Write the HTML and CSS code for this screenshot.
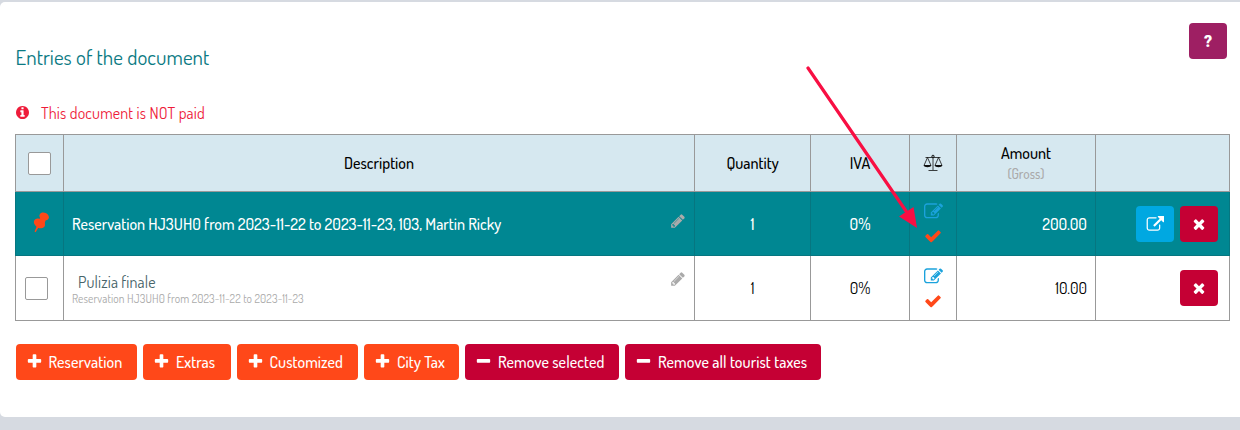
FILE: index.html
```
<!DOCTYPE html>
<html lang="en">
<head>
    <meta charset="UTF-8">
    <meta name="viewport" content="width=device-width, initial-scale=1.0">
    <title>Entries of the document</title>
    <link rel="stylesheet" href="styles.css">
</head>
<body>
    <!-- icon shapes -->
    <svg class="icon-defs" width="0" height="0">
        <symbol id="plus" viewBox="0 0 1792 1792"><path d="M1600 736v192q0 40-28 68t-68 28h-416v416q0 40-28 68t-68 28h-192q-40 0-68-28t-28-68v-416h-416q-40 0-68-28t-28-68v-192q0-40 28-68t68-28h416v-416q0-40 28-68t68-28h192q40 0 68 28t28 68v416h416q40 0 68 28t28 68z"/></symbol>
        <symbol id="minus" viewBox="0 0 1792 1792"><path d="M1600 736v192q0 40-28 68t-68 28h-1216q-40 0-68-28t-28-68v-192q0-40 28-68t68-28h1216q40 0 68 28t28 68z"/></symbol>
        <symbol id="times" viewBox="0 0 1792 1792"><path d="M1490 1322q0 40-28 68l-136 136q-28 28-68 28t-68-28l-294-294-294 294q-28 28-68 28t-68-28l-136-136q-28-28-28-68t28-68l294-294-294-294q-28-28-28-68t28-68l136-136q28-28 68-28t68 28l294 294 294-294q28-28 68-28t68 28l136 136q28 28 28 68t-28 68l-294 294 294 294q28 28 28 68z"/></symbol>
        <symbol id="check" viewBox="0 0 1792 1792"><path d="M1671 566q0 40-28 68l-724 724-136 136q-28 28-68 28t-68-28l-136-136-362-362q-28-28-28-68t28-68l136-136q28-28 68-28t68 28l294 295 656-657q28-28 68-28t68 28l136 136q28 28 28 68z"/></symbol>
        <symbol id="pencil" viewBox="0 0 1792 1792"><path d="M491 1536l91-91-235-235-91 91v107h128v128h107zm523-928q0-22-22-22-10 0-17 7l-542 542q-7 7-7 17 0 22 22 22 10 0 17-7l542-542q7-7 7-17zm-54-192l416 416-832 832h-416v-416zm683 96q0 53-37 90l-166 166-416-416 166-165q36-38 90-38 53 0 91 38l235 234q37 39 37 91z"/></symbol>
        <symbol id="external" viewBox="0 0 1856 1792"><path d="M1472 992v320q0 119-84.5 203.5t-203.5 84.5h-832q-119 0-203.5-84.5t-84.5-203.5v-832q0-119 84.5-203.5t203.5-84.5h704q14 0 23 9t9 23v64q0 14-9 23t-23 9h-704q-66 0-113 47t-47 113v832q0 66 47 113t113 47h832q66 0 113-47t47-113v-320q0-14 9-23t23-9h64q14 0 23 9t9 23zm384-864v512q0 26-19 45t-45 19-45-19l-176-176-652 652q-10 10-23 10t-23-10l-114-114q-10-10-10-23t10-23l652-652-176-176q-19-19-19-45t19-45 45-19h512q26 0 45 19t19 45z"/></symbol>
        <symbol id="edit" viewBox="0 0 1792 1792"><path d="M888 1184l116-116-152-152-116 116v56h96v96h56zm440-720q-16-16-33 1l-350 350q-17 17-1 33t33-1l350-350q17-17 1-33zm80 594v190q0 119-84.5 203.5t-203.5 84.5h-832q-119 0-203.5-84.5t-84.5-203.5v-832q0-119 84.5-203.5t203.5-84.5h832q63 0 117 25 15 7 18 23 3 17-9 29l-49 49q-14 14-32 8-23-6-45-6h-832q-66 0-113 47t-47 113v832q0 66 47 113t113 47h832q66 0 113-47t47-113v-126q0-13 9-22l64-64q15-15 35-7t20 29zm-96-738l288 288-672 672h-288v-288zm444 132l-92 92-288-288 92-92q28-28 68-28t68 28l152 152q28 28 28 68t-28 68z"/></symbol>
    </svg>

    <div class="panel">
        <div class="panel-header">
            <h1>Entries of the document</h1>
            <button class="btn-icon help">?</button>
        </div>

        <p class="warning">
            <svg class="info" viewBox="128 128 1536 1536"><path d="M1152 1376v-160q0-14-9-23t-23-9h-96v-512q0-14-9-23t-23-9h-320q-14 0-23 9t-9 23v160q0 14 9 23t23 9h96v320h-96q-14 0-23 9t-9 23v160q0 14 9 23t23 9h448q14 0 23-9t9-23zm-128-896v-160q0-14-9-23t-23-9h-192q-14 0-23 9t-9 23v160q0 14 9 23t23 9h192q14 0 23-9t9-23zm640 416q0 209-103 385.5t-279.5 279.5-385.5 103-385.5-103-279.5-279.5-103-385.5 103-385.5 279.5-279.5 385.5-103 385.5 103 279.5 279.5 103 385.5z"/></svg>
            <span>This document is NOT paid</span>
        </p>

        <table>
            <colgroup>
                <col class="col-check"><col class="col-desc"><col class="col-qty"><col class="col-iva"><col class="col-tax"><col class="col-amount"><col class="col-actions">
            </colgroup>
            <tr class="head">
                <th><span class="checkbox"></span></th>
                <th>Description</th>
                <th>Quantity</th>
                <th>IVA</th>
                <th>
                    <svg class="scale" viewBox="0 0 20 18"><path d="M10 1v15M5.500 16.500h9M2.500 3.500h15M4.500 3.500L1.200 11M4.500 3.500L7.800 11M15.500 3.500L12.200 11M15.500 3.500L18.800 11"/><path class="pan" d="M.5 11h8c-.5 3-7.500 3-8 0zM11.500 11h8c-.5 3-7.500 3-8 0z"/><circle cx="10" cy="2.500" r="1.300"/></svg>
                </th>
                <th>Amount<small>(Gross)</small></th>
                <th></th>
            </tr>
            <tr class="selected">
                <td class="pick">
                    <svg class="pin" viewBox="0 0 18 22"><ellipse cx="11.800" cy="4.600" rx="5.200" ry="4" transform="rotate(25 11.800 4.600)"/><ellipse cx="6.800" cy="12" rx="6.300" ry="4.600" transform="rotate(32 6.800 12)"/><path d="M8.500 5l5 3-1.500 5-6.500-3zM4.500 14l2 1-3.700 6.200-1.200-.6z"/></svg>
                </td>
                <td>
                    <div class="desc">
                        <span class="title">Reservation HJ3UH0 from 2023-11-22 to 2023-11-23, 103, Martin Ricky</span>
                        <svg class="pencil"><use href="#pencil"/></svg>
                    </div>
                </td>
                <td>1</td>
                <td>0%</td>
                <td class="tax">
                    <svg class="edit"><use href="#edit"/></svg>
                    <svg class="check"><use href="#check"/></svg>
                </td>
                <td class="amount">200.00</td>
                <td>
                    <div class="actions">
                        <button class="btn-icon open"><svg><use href="#external"/></svg></button>
                        <button class="btn-icon delete"><svg><use href="#times"/></svg></button>
                    </div>
                </td>
            </tr>
            <tr>
                <td class="pick"><span class="checkbox"></span></td>
                <td>
                    <div class="desc two-lines">
                        <div>
                            <div class="extra">Pulizia finale</div>
                            <div class="note">Reservation HJ3UH0 from 2023-11-22 to 2023-11-23</div>
                        </div>
                        <svg class="pencil"><use href="#pencil"/></svg>
                    </div>
                </td>
                <td>1</td>
                <td>0%</td>
                <td class="tax">
                    <svg class="edit"><use href="#edit"/></svg>
                    <svg class="check"><use href="#check"/></svg>
                </td>
                <td class="amount">10.00</td>
                <td>
                    <div class="actions">
                        <button class="btn-icon delete"><svg><use href="#times"/></svg></button>
                    </div>
                </td>
            </tr>
        </table>

        <div class="toolbar">
            <button class="btn b-res"><svg><use href="#plus"/></svg><span>Reservation</span></button>
            <button class="btn b-ext"><svg><use href="#plus"/></svg><span>Extras</span></button>
            <button class="btn b-cus"><svg><use href="#plus"/></svg><span>Customized</span></button>
            <button class="btn b-tax"><svg><use href="#plus"/></svg><span>City Tax</span></button>
            <button class="btn remove b-sel"><svg><use href="#minus"/></svg><span>Remove selected</span></button>
            <button class="btn remove b-all"><svg><use href="#minus"/></svg><span>Remove all tourist taxes</span></button>
        </div>
    </div>

    <!-- pointer over the tax column -->
    <svg class="arrow" viewBox="0 0 112 164"><path class="line" d="M2 2L102 148"/><path d="M111 162L93 150.500L107.500 141z"/></svg>
</body>
</html>
```
FILE: styles.css
```
* {
    box-sizing: border-box;
}

body {
    margin: 0;
    padding-top: 2px;
    height: 430px;
    overflow: hidden;
    background-color: #d6dae1;
    font-family: Dosis, Roboto, sans-serif;
    font-size: 16px;
    color: #000;
}

svg {
    display: block;
    fill: currentColor;
}

.icon-defs {
    position: absolute;
}

.panel {
    height: 415px;
    padding: 0 10px 0 15px;
    background-color: #fff;
    border-radius: 5px 0 0 5px;
}

.panel-header {
    display: flex;
    justify-content: space-between;
    height: 91px;
    padding: 21px 3px 0 0;
}

h1 {
    margin: 20px 0 0 0.5px;
    font-size: 21px;
    line-height: 28px;
    font-weight: 400;
    letter-spacing: 0.05px;
    color: #0b7a83;
}

.btn-icon {
    display: flex;
    align-items: center;
    justify-content: center;
    width: 38px;
    height: 36px;
    padding: 0;
    border: none;
    border-radius: 4px;
    color: #fff;
}

.help {
    background-color: #9e1f63;
    font: 900 16px Roboto, sans-serif;
}

.warning {
    display: flex;
    align-items: center;
    gap: 12px;
    height: 41px;
    margin: 0;
    padding-bottom: 2px;
    letter-spacing: 0.16px;
    color: #ee1c3a;
}

.info {
    width: 13px;
    height: 13px;
    margin-left: 1px;
}

table {
    width: 1214px;
    table-layout: fixed;
    border-collapse: collapse;
}

.col-check { width: 48px; }
.col-desc { width: 631px; }
.col-qty { width: 116px; }
.col-iva { width: 99px; }
.col-tax { width: 47px; }
.col-amount { width: 139px; }
.col-actions { width: 134px; }

th, td {
    height: 65px;
    padding: 0 8px;
    border: 1px solid #999;
    text-align: center;
    line-height: 20px;
}

tr.head th {
    height: 57px;
    background-color: #d6e8f0;
    font-weight: 550;
}

th small {
    display: block;
    font-size: 13.5px;
    line-height: 21px;
    font-weight: 500;
    color: #aaa;
}

tr.selected td {
    height: 64px;
    background-color: #008792;
    border-color: #067680;
    color: #fff;
    font-weight: 500;
}

.checkbox {
    display: block;
    width: 23px;
    height: 23px;
    margin: 0 auto;
    background-color: #fff;
    border: 1px solid #999;
    border-radius: 2px;
}

.pick .checkbox {
    margin: 0 0 0 1px;
}

.pin {
    width: 17px;
    height: 21px;
    margin: -2px 0 0 9px;
    color: #ff4819;
}

.scale {
    width: 20px;
    height: 18px;
    margin: 0 auto;
    fill: none;
    stroke: #111;
    stroke-width: 0.8;
}

.scale .pan {
    fill: #111;
    stroke: none;
}

.desc {
    display: flex;
    justify-content: space-between;
    align-items: center;
    text-align: left;
}

.pencil {
    width: 16px;
    height: 16px;
    margin-top: -5px;
    color: #aaa;
}

.two-lines .pencil {
    margin-top: -18px;
}

.desc .title {
    white-space: nowrap;
}

.extra {
    padding: 1px 0 0 6px;
    letter-spacing: 0.14px;
    color: #476469;
}

.note {
    font-size: 11.5px;
    line-height: 14px;
    letter-spacing: 0.12px;
    color: #aaa;
}

.tax {
    padding: 0;
}

.tax svg {
    margin: 0 auto;
    color: #1ba2dc;
}

.edit {
    width: 19px;
    height: 19px;
}

.tax .check {
    width: 18px;
    height: 18px;
    margin-top: 6px;
    color: #ff4819;
}

.amount {
    text-align: right;
}

.actions {
    display: flex;
    justify-content: flex-end;
    gap: 6px;
    padding-right: 3px;
}

.open {
    background-color: #00a8e1;
}

.open svg {
    width: 18px;
    height: 18px;
}

.delete {
    background-color: #c50034;
}

.delete svg {
    width: 16px;
    height: 16px;
}

.toolbar {
    display: flex;
    gap: 6px;
    padding: 23px 0 0 0.5px;
}

.btn {
    display: flex;
    align-items: center;
    gap: 6px;
    height: 36px;
    padding: 0 0 0 10px;
    border: none;
    border-radius: 4px;
    background-color: #ff4819;
    color: #fff;
    font-family: inherit;
    font-size: 16px;
    font-weight: 500;
    letter-spacing: 0.08px;
    white-space: nowrap;
}

.btn svg {
    width: 17px;
    height: 17px;
    margin-top: -1px;
}

.btn.remove {
    background-color: #c50034;
}

.b-res { width: 121.5px; }
.b-ext { width: 87.5px; }
.b-cus { width: 121.5px; }
.b-tax { width: 95px; }
.b-sel { width: 154px; }
.b-all { width: 196px; }

.arrow {
    position: absolute;
    left: 806px;
    top: 66px;
    width: 112px;
    height: 164px;
    fill: #f80f43;
}

.arrow .line {
    stroke: #f80f43;
    stroke-width: 3.2;
    stroke-linecap: round;
}
```
